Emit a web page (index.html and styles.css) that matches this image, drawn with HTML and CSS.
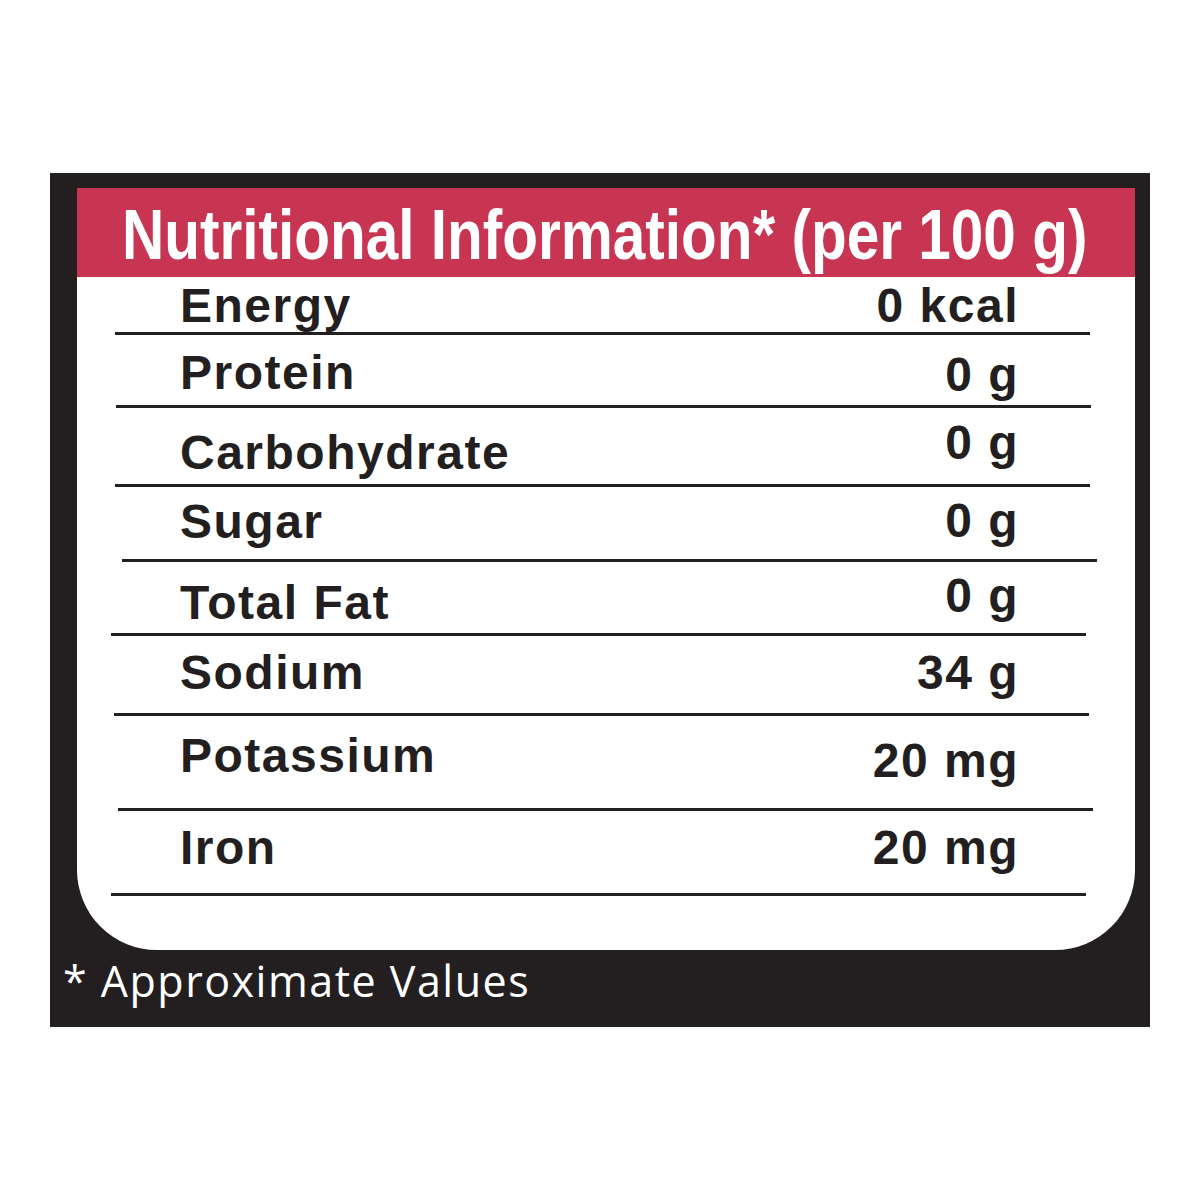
FILE: index.html
```html
<!DOCTYPE html>
<html lang="en">
<head>
<meta charset="utf-8">
<title>Nutritional Information</title>
<link rel="stylesheet" href="styles.css">
</head>
<body>
<div class="panel">
  <div class="card">
    <div class="header"><span class="title">Nutritional Information* (per 100 g)</span></div>
    <div class="rows">
      <div class="row r1"><span class="label">Energy</span><span class="value">0 kcal</span></div>
      <div class="row r2"><span class="label">Protein</span><span class="value">0 g</span></div>
      <div class="row r3"><span class="label">Carbohydrate</span><span class="value">0 g</span></div>
      <div class="row r4"><span class="label">Sugar</span><span class="value">0 g</span></div>
      <div class="row r5"><span class="label">Total Fat</span><span class="value">0 g</span></div>
      <div class="row r6"><span class="label">Sodium</span><span class="value">34 g</span></div>
      <div class="row r7"><span class="label">Potassium</span><span class="value">20 mg</span></div>
      <div class="row r8"><span class="label">Iron</span><span class="value">20 mg</span></div>
    </div>
  </div>
  <div class="footer">* Approximate Values</div>
</div>
</body>
</html>
```
FILE: styles.css
```css
html, body {
  margin: 0;
  padding: 0;
  background: #ffffff;
}

body {
  padding-top: 173px;
  padding-left: 50px;
}

.panel {
  width: 1100px;
  height: 854px;
  background: #231f20;
  box-sizing: border-box;
  padding: 15px 15px 0 27px;
  display: flex;
  flex-direction: column;
}

.card {
  background: #ffffff;
  height: 762px;
  border-radius: 0 0 80px 80px;
  display: flex;
  flex-direction: column;
  overflow: hidden;
}

.header {
  height: 89px;
  background: #c73552;
  box-sizing: border-box;
  padding-left: 45px;
  display: flex;
  align-items: flex-end;
}

.title {
  display: inline-block;
  font-family: "Liberation Sans", Arial, sans-serif;
  font-weight: bold;
  font-size: 71px;
  line-height: 71px;
  color: #ffffff;
  white-space: nowrap;
  margin-bottom: 7px;
  transform: scaleX(0.824);
  transform-origin: left center;
}

.rows {
  display: flex;
  flex-direction: column;
}

.row {
  --dx: 0px;
  --h: 73px;
  --lb: 8px;
  --vb: 8px;
  box-sizing: border-box;
  height: var(--h);
  width: 975px;
  margin-left: calc(38px + var(--dx));
  border-bottom: 3px solid #231f20;
  display: flex;
  justify-content: space-between;
  align-items: flex-end;
  font-family: "Liberation Sans", Arial, sans-serif;
  font-weight: bold;
  font-size: 48px;
  line-height: 1;
  letter-spacing: 1.5px;
  color: #231f20;
}

.label {
  padding-left: calc(65px - var(--dx));
  margin-bottom: var(--lb);
}

.value {
  padding-right: calc(71px + var(--dx));
  margin-bottom: var(--vb);
  white-space: nowrap;
}

.r1 { --h: 58px; --dx: 0px;  --lb: 2px;  --vb: 2px; }
.r2 { --h: 73px; --dx: 1px;  --lb: 8px;  --vb: 6px; }
.r3 { --h: 79px; --dx: 0px;  --lb: 7px;  --vb: 17px; }
.r4 { --h: 75px; --dx: 7px;  --lb: 13px; --vb: 14px; }
.r5 { --h: 74px; --dx: -4px; --lb: 6px;  --vb: 13px; }
.r6 { --h: 80px; --dx: -1px; --lb: 16px; --vb: 16px; }
.r7 { --h: 95px; --dx: 3px;  --lb: 28px; --vb: 23px; }
.r8 { --h: 85px; --dx: -4px; --lb: 21px; --vb: 21px; }

.footer {
  margin-left: -14px;
  font-family: "Open Sans", "Noto Sans", sans-serif;
  font-size: 43px;
  line-height: 1;
  letter-spacing: 1.5px;
  color: #ffffff;
  padding-top: 9px;
  white-space: nowrap;
}
```
